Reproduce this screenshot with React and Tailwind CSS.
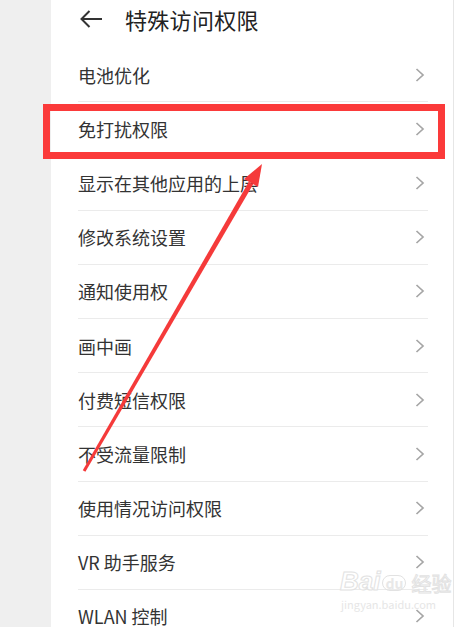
const ROWS = [
  '电池优化',
  '免打扰权限',
  '显示在其他应用的上层',
  '修改系统设置',
  '通知使用权',
  '画中画',
  '付费短信权限',
  '不受流量限制',
  '使用情况访问权限',
  'VR 助手服务',
  'WLAN 控制',
];

function Chevron() {
  return (
    <svg width="10" height="14" viewBox="0 0 10 14" className="shrink-0">
      <polyline points="1.5,1 8,7 1.5,13" fill="none" stroke="#a6a6a6" strokeWidth="1.7" strokeLinejoin="miter" />
    </svg>
  );
}

export default function App() {
  return (
    <div
      className="relative w-[457px] h-[627px] overflow-hidden bg-[#efefef] flex"
      style={{ fontFamily: '"Noto Sans CJK SC", "Noto Sans", sans-serif' }}
    >
      <div className="w-[51px] shrink-0" />
      <div className="w-[403px] shrink-0 bg-white border-r border-[#e6e6e6] flex flex-col">
        {/* header */}
        <div className="h-[48px] shrink-0 flex items-start pt-[7px] pl-[29px]">
          <svg width="23" height="18" viewBox="0 0 23 18" className="mt-[3px]">
            <line x1="1.5" y1="9" x2="22" y2="9" stroke="#333" strokeWidth="2" />
            <polyline points="9.5,1 1.5,9 9.5,17" fill="none" stroke="#333" strokeWidth="2" />
          </svg>
          <h1 className="ml-[22px] text-[22px] leading-[24px] text-[#222] font-normal tracking-[0.3px]">特殊访问权限</h1>
        </div>

        {/* rows */}
        <div className="shrink-0 pl-[27px] pr-[25px]">
          {ROWS.map((label) => (
            <div
              key={label}
              className="h-[54.2px] flex items-center justify-between border-b border-[#ebebeb] pr-[3px]"
            >
              <span className="text-[18px] text-[#333] leading-none">{label}</span>
              <Chevron />
            </div>
          ))}
        </div>
      </div>
      <div className="flex-1 bg-white" />

      {/* annotation: red box */}
      <div className="absolute left-[43px] top-[104px] w-[402px] h-[55px] border-[7px] border-[#fb3a3a]" />

      {/* annotation: red arrow */}
      <svg className="absolute inset-0 pointer-events-none" width="457" height="627" viewBox="0 0 457 627">
        <polygon points="82.8,470.3 85.4,471.8 253.2,184.3 248.8,181.8" fill="#f53a3a" />
        <polygon points="262,164 244,179 258,187" fill="#f53a3a" />
      </svg>

      {/* watermark */}
      <div className="absolute left-[340px] top-[568px] flex flex-col items-start pointer-events-none select-none">
        <div className="flex items-end gap-[2px]">
          <span
            className="text-[26px] leading-none font-bold text-white italic"
            style={{ WebkitTextStroke: '1px #e2e2e2', fontFamily: '"Liberation Sans", sans-serif' }}
          >
            Bai
          </span>
          <span className="text-[14px] leading-none font-bold text-[#e8e8e8] rounded-full border border-[#e2e2e2] px-[2px] mb-[3px]">du</span>
          <span
            className="text-[20px] leading-none text-white ml-[3px]"
            style={{ WebkitTextStroke: '1px #e2e2e2' }}
          >
            经验
          </span>
        </div>
        <span className="text-[11px] leading-none text-[#e6e6e6] mt-[5px] ml-[1px]">jingyan.baidu.com</span>
      </div>
    </div>
  );
}
